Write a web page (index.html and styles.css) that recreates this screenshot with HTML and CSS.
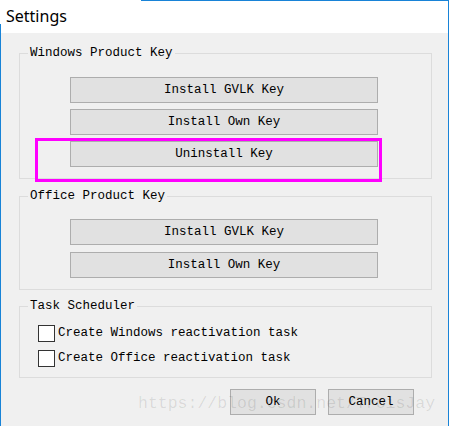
FILE: index.html
```html
<!DOCTYPE html>
<html lang="en">
<head>
    <meta charset="UTF-8">
    <title>Settings</title>
    <link rel="stylesheet" href="styles.css">
</head>
<body>
    <div class="window">
        <div class="titlebar">Settings</div>

        <div class="content">
            <div class="group group-windows">
                <div class="group-title">Windows Product Key</div>
                <button class="btn wide">Install GVLK Key</button>
                <button class="btn wide">Install Own Key</button>
                <button class="btn wide">Uninstall Key</button>
            </div>

            <div class="group group-office">
                <div class="group-title">Office Product Key</div>
                <button class="btn wide">Install GVLK Key</button>
                <button class="btn wide">Install Own Key</button>
            </div>

            <div class="group group-tasks">
                <div class="group-title">Task Scheduler</div>
                <label class="check"><span class="box"></span>Create Windows reactivation task</label>
                <label class="check"><span class="box"></span>Create Office reactivation task</label>
            </div>

            <div class="actions">
                <button class="btn small">Ok</button>
                <button class="btn small">Cancel</button>
            </div>
        </div>

        <!-- annotation and watermark on top of the dialog -->
        <div class="highlight"></div>
        <div class="watermark">https://blog.csdn.net/TroisJay</div>
    </div>
</body>
</html>
```

FILE: styles.css
```css
body {
    margin: 0;
    background-color: #fff;
}
.window {
    position: relative;
    width: 449px;
    height: 426px;
    box-sizing: border-box;
    border-right: 1px solid #1883d7;
    background: linear-gradient(#1883d7, #1883d7) no-repeat 0 24px / 1px 100%, #fff;
    overflow: hidden;
}
.titlebar {
    height: 33px;
    margin-left: 1px;
    padding-left: 5px;
    box-sizing: border-box;
    background: linear-gradient(#1883d7, #1883d7) no-repeat 140px 0 / 100% 1px, #fff;
    font-family: "Noto Sans", sans-serif;
    font-size: 16px;
    line-height: 33px;
    color: #000;
}
.content {
    margin-left: 1px;
    height: 393px;
    padding: 20px 16px 0 18px;
    box-sizing: border-box;
    background-color: #f0f0f0;
    font-family: "Liberation Mono", monospace;
    font-size: 12.5px;
    color: #000;
}
.group {
    display: flex;
    flex-direction: column;
    border: 1px solid #dcdcdc;
    padding: 0 0 11px 0;
}
/* gap of the group also applies below the title */
.group-title {
    align-self: flex-start;
    margin: -9px 0 10px 8px;
    padding: 0 2px;
    line-height: 16px;
    background-color: #f0f0f0;
}
.group-windows {
    gap: 6px;
}
.group-office {
    margin-top: 17px;
    gap: 7px;
}
.group-office .group-title {
    margin-bottom: 8px;
}
.group-tasks {
    margin-top: 16px;
    gap: 9px;
}
.group-tasks .group-title {
    margin-bottom: 2px;
}
.btn {
    height: 26px;
    margin: 0;
    padding: 0;
    background-color: #e1e1e1;
    border: 1px solid #adadad;
    font-family: "Liberation Mono", monospace;
    font-size: 12.5px;
    color: #000;
}
.btn.wide {
    width: 308px;
    margin-left: 50px;
}
.check {
    display: flex;
    align-items: center;
    height: 16px;
    margin-left: 18px;
}
.box {
    width: 15px;
    height: 15px;
    margin-right: 3px;
    border: 1px solid #333;
    background-color: #fff;
}
.actions {
    display: flex;
    gap: 12px;
    margin-top: 11px;
    padding-left: 211px;
}
.btn.small {
    width: 86px;
}
.highlight {
    position: absolute;
    left: 35px;
    top: 138px;
    width: 341px;
    height: 38px;
    border: 3px solid #f0f;
}
.watermark {
    position: absolute;
    left: 138px;
    top: 394px;
    font-family: "Liberation Mono", monospace;
    font-size: 16.5px;
    color: rgba(0, 0, 0, 0.1);
    pointer-events: none;
}
```
